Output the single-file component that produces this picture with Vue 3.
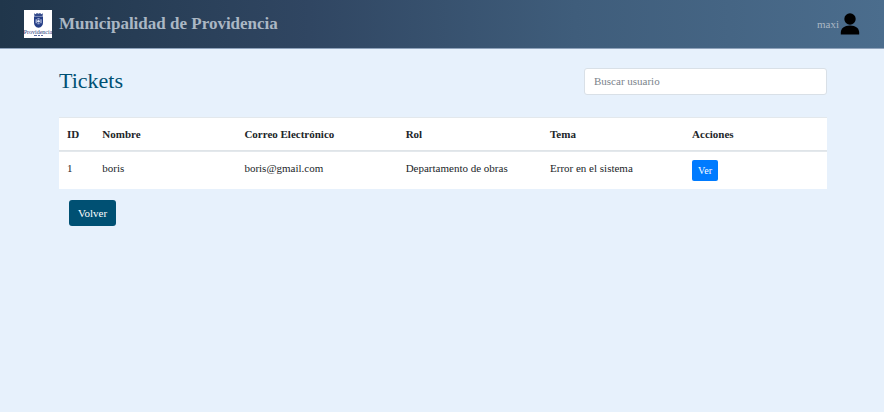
<script setup>
import { computed, ref } from 'vue'

const search = ref('')
const tickets = ref([
  { id: 1, name: 'boris', email: 'boris@gmail.com', role: 'Departamento de obras', topic: 'Error en el sistema' },
])

const visibleTickets = computed(() => {
  const term = search.value.trim().toLowerCase()
  return tickets.value.filter((ticket) => ticket.name.toLowerCase().includes(term))
})
</script>

<template>
  <header class="navbar">
    <a class="brand" href="#">
      <svg class="logo" viewBox="0 0 28 28" aria-hidden="true">
        <rect width="28" height="28" fill="#fff" />
        <path d="M10 3.2l1.600 1 1.300-1.200 1.600.8 1.600-.8 1.300 1.200 1.600-1-.5 3h-8z" fill="#344b8c" />
        <path d="M10 6.400h9v6q0 4.400-4.500 5.400Q10 16.800 10 12.400z" fill="#263f86" />
        <path d="M11.600 9.200h1.200v4h-1.200zM16.400 9.200h1.200v4h-1.200zM13.400 8.200h2.200v1.200h-2.200zM13.400 13.200h2.200v1h-2.200z" fill="#b9c4e2" />
        <circle cx="14.500" cy="11.300" r="1.300" fill="#e5eaf6" />
        <text x="14" y="23.500" text-anchor="middle" class="logo-name">Providencia</text>
        <path d="M10 25.500h3M14 25.500h2M17 25.500h2" stroke="#5b6ba0" stroke-width="1" />
      </svg>
      <span class="brand-name">Municipalidad de Providencia</span>
    </a>
    <a class="user" href="#">
      <span>maxi</span>
      <svg class="avatar" viewBox="0 0 20 22" aria-hidden="true">
        <circle cx="10" cy="6" r="5.700" />
        <path d="M.8 21.400v-1.600C.8 15.500 4.200 12.600 10 12.600s9.200 2.900 9.200 7.200v1.600z" />
      </svg>
    </a>
  </header>

  <main class="container">
    <div class="toolbar">
      <h1>Tickets</h1>
      <input v-model="search" class="search" type="text" placeholder="Buscar usuario" aria-label="Buscar usuario" />
    </div>

    <table class="tickets">
      <colgroup>
        <col class="col-id" />
        <col class="col-name" />
        <col class="col-email" />
        <col class="col-role" />
        <col class="col-topic" />
        <col />
      </colgroup>
      <thead>
        <tr>
          <th scope="col">ID</th>
          <th scope="col">Nombre</th>
          <th scope="col">Correo Electrónico</th>
          <th scope="col">Rol</th>
          <th scope="col">Tema</th>
          <th scope="col">Acciones</th>
        </tr>
      </thead>
      <tbody>
        <tr v-for="ticket in visibleTickets" :key="ticket.id">
          <td>{{ ticket.id }}</td>
          <td>{{ ticket.name }}</td>
          <td>{{ ticket.email }}</td>
          <td>{{ ticket.role }}</td>
          <td>{{ ticket.topic }}</td>
          <td><button class="btn btn-view" type="button">Ver</button></td>
        </tr>
      </tbody>
    </table>

    <button class="btn btn-back" type="button">Volver</button>
  </main>
</template>

<style>
body {
  background: #e7f1fc;
}
</style>

<style scoped>
.navbar,
.container {
  font-family: "Liberation Serif", "Times New Roman", serif;
  font-size: 11px;
  line-height: 16px;
  color: #212529;
}

.navbar {
  display: flex;
  align-items: center;
  justify-content: space-between;
  box-sizing: border-box;
  height: 49px;
  padding: 0 24px;
  background: linear-gradient(to right, #20364b, #304662 35%, #3f5d7b 65%, #4b6d8d);
  border-bottom: 1px solid #8ea2bb;
}

.brand,
.user {
  display: flex;
  align-items: center;
  color: #abb7c4;
  text-decoration: none;
}

.brand {
  gap: 7px;
}

.logo {
  width: 28px;
  height: 28px;
}

.logo-name {
  font-size: 6px;
  fill: #263b7c;
}

.brand-name {
  font-size: 17px;
  font-weight: 700;
  line-height: 26px;
}

.user {
  gap: 1px;
}

.avatar {
  width: 20px;
  height: 22px;
  fill: #000;
}

.container {
  padding: 18px 57px 0 59px;
}

.toolbar {
  display: flex;
  align-items: center;
  justify-content: space-between;
  margin-bottom: 22px;
}

h1 {
  margin: 0;
  font-size: 22px;
  font-weight: 400;
  line-height: 28px;
  color: #005073;
}

.search {
  box-sizing: border-box;
  width: 243px;
  height: 27px;
  padding: 0 9px;
  font: inherit;
  color: #495057;
  background: #fff;
  border: 1px solid #d9e0e7;
  border-radius: 3px;
}

.search::placeholder {
  color: #7b838b;
  opacity: 1;
}

.tickets {
  width: 100%;
  table-layout: fixed;
  border-collapse: separate;
  border-spacing: 0;
  background: #fff;
}

.col-id {
  width: 4.6%;
}

.col-name,
.col-topic {
  width: 18.5%;
}

.col-email {
  width: 21%;
}

.col-role {
  width: 18.8%;
}

th,
td {
  padding: 8px;
  text-align: left;
  vertical-align: top;
  border-top: 1px solid #e3e8ec;
}

th {
  border-bottom: 1px solid #dfe4e8;
}

.btn {
  font-family: inherit;
  color: #fff;
  border: 0;
  cursor: pointer;
}

.btn-view {
  display: block;
  height: 21px;
  padding: 0 6px;
  font-size: 10px;
  background: #007bff;
  border-radius: 2px;
}

.btn-back {
  height: 26px;
  margin: 11px 10px;
  padding: 0 9px;
  font-size: 11px;
  background: #005073;
  border-radius: 3px;
}
</style>
